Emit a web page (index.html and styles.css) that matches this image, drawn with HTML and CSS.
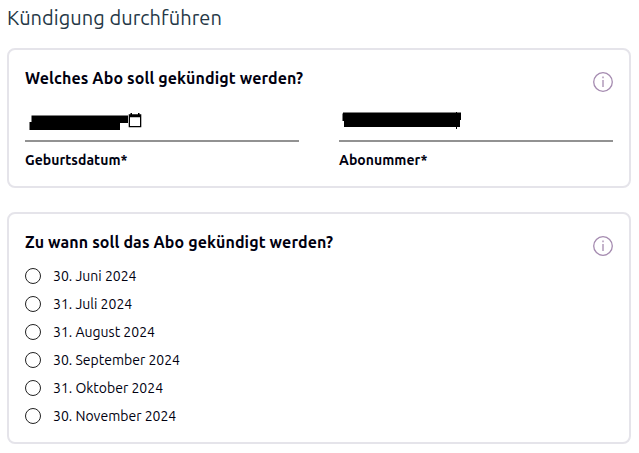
FILE: index.html
```html
<!DOCTYPE html>
<html lang="de">
<head>
    <meta charset="UTF-8">
    <meta name="viewport" content="width=device-width, initial-scale=1.0">
    <title>Kündigung durchführen</title>
    <link rel="stylesheet" href="styles.css">
</head>
<body>
    <h1>Kündigung durchführen</h1>

    <section class="card card-abo">
        <div class="card-header">
            <h2>Welches Abo soll gekündigt werden?</h2>
            <svg class="info" viewBox="0 0 20 20">
                <circle cx="10" cy="10" r="9.3" />
                <path d="M10 4.4v1.8M10 8v7" />
            </svg>
        </div>
        <div class="fields">
            <div class="field">
                <div class="field-value">
                    <svg class="masked" width="103" height="20" viewBox="0 0 103 20">
                        <path d="M6.5 4.5H103V12h-8v7H4.5v-8h2z" />
                    </svg>
                    <svg class="calendar" width="14" height="15" viewBox="0 0 14 15">
                        <path d="M2.5 0h1.5v1.3h6V0h1.5v1.3h1.8v12.9H.7V1.3h1.8zM2 4.2v8.7h10V4.2z" fill-rule="evenodd" />
                    </svg>
                </div>
                <label>Geburtsdatum*</label>
            </div>
            <div class="field">
                <div class="field-value">
                    <svg class="masked" width="123" height="20" viewBox="0 0 123 20">
                        <path d="M4 1.5h113V1h1v.5h4V9h-1v7h-3v2h-1v-2H5v-6H3.5V2.5H4z" />
                    </svg>
                </div>
                <label>Abonummer*</label>
            </div>
        </div>
    </section>

    <section class="card card-date">
        <div class="card-header">
            <h2>Zu wann soll das Abo gekündigt werden?</h2>
            <svg class="info" viewBox="0 0 20 20">
                <circle cx="10" cy="10" r="9.3" />
                <path d="M10 4.4v1.8M10 8v7" />
            </svg>
        </div>
        <div class="options">
            <label><input type="radio" name="date"><span>30. Juni 2024</span></label>
            <label><input type="radio" name="date"><span>31. Juli 2024</span></label>
            <label><input type="radio" name="date"><span>31. August 2024</span></label>
            <label><input type="radio" name="date"><span>30. September 2024</span></label>
            <label><input type="radio" name="date"><span>31. Oktober 2024</span></label>
            <label><input type="radio" name="date"><span>30. November 2024</span></label>
        </div>
    </section>
</body>
</html>
```
FILE: styles.css
```css
* {
    box-sizing: border-box;
}

body {
    margin: 0;
    padding: 4px 8px 0 7px;
    font-family: Ubuntu, "Noto Sans", sans-serif;
    font-size: 14px;
    color: #00000f;
    background-color: #fff;
}

h1 {
    margin: 0 0 16px;
    font-size: 20px;
    font-weight: 400;
    line-height: 28px;
    letter-spacing: 0.05px;
    color: #253746;
}

.card {
    border: 2px solid #e5e4ea;
    border-radius: 8px;
    padding: 16px 16px 0;
}

.card-abo {
    height: 140px;
    margin-bottom: 24px;
}

.card-date {
    height: 232px;
}

.card-header {
    display: flex;
    justify-content: space-between;
    height: 28px;
}

h2 {
    margin: 0;
    font-size: 16px;
    font-weight: 700;
    line-height: 24px;
    letter-spacing: 0.11px;
    white-space: nowrap;
}

.info {
    width: 20px;
    height: 20px;
    margin-top: 6px;
    fill: none;
    stroke: #a58bb0;
    stroke-width: 1.3;
}

.fields {
    display: grid;
    grid-template-columns: 1fr 1fr;
    gap: 40px;
    margin-top: 17px;
}

.field-value {
    display: flex;
    height: 31px;
    border-bottom: 2px solid #929292;
}

.calendar {
    margin-top: 2px;
}

.field label {
    display: block;
    margin-top: 8px;
    font-size: 14px;
    font-weight: 700;
    line-height: 20px;
    letter-spacing: 0.04px;
}

.options {
    margin-top: 4px;
}

.options label {
    display: flex;
    align-items: center;
    height: 28px;
}

.options input {
    appearance: none;
    width: 16px;
    height: 16px;
    margin: 0 12px 0 0;
    border: 1px solid #222;
    border-radius: 50%;
    background-color: #fff;
}

.options span {
    font-size: 14px;
    line-height: 20px;
}
```
